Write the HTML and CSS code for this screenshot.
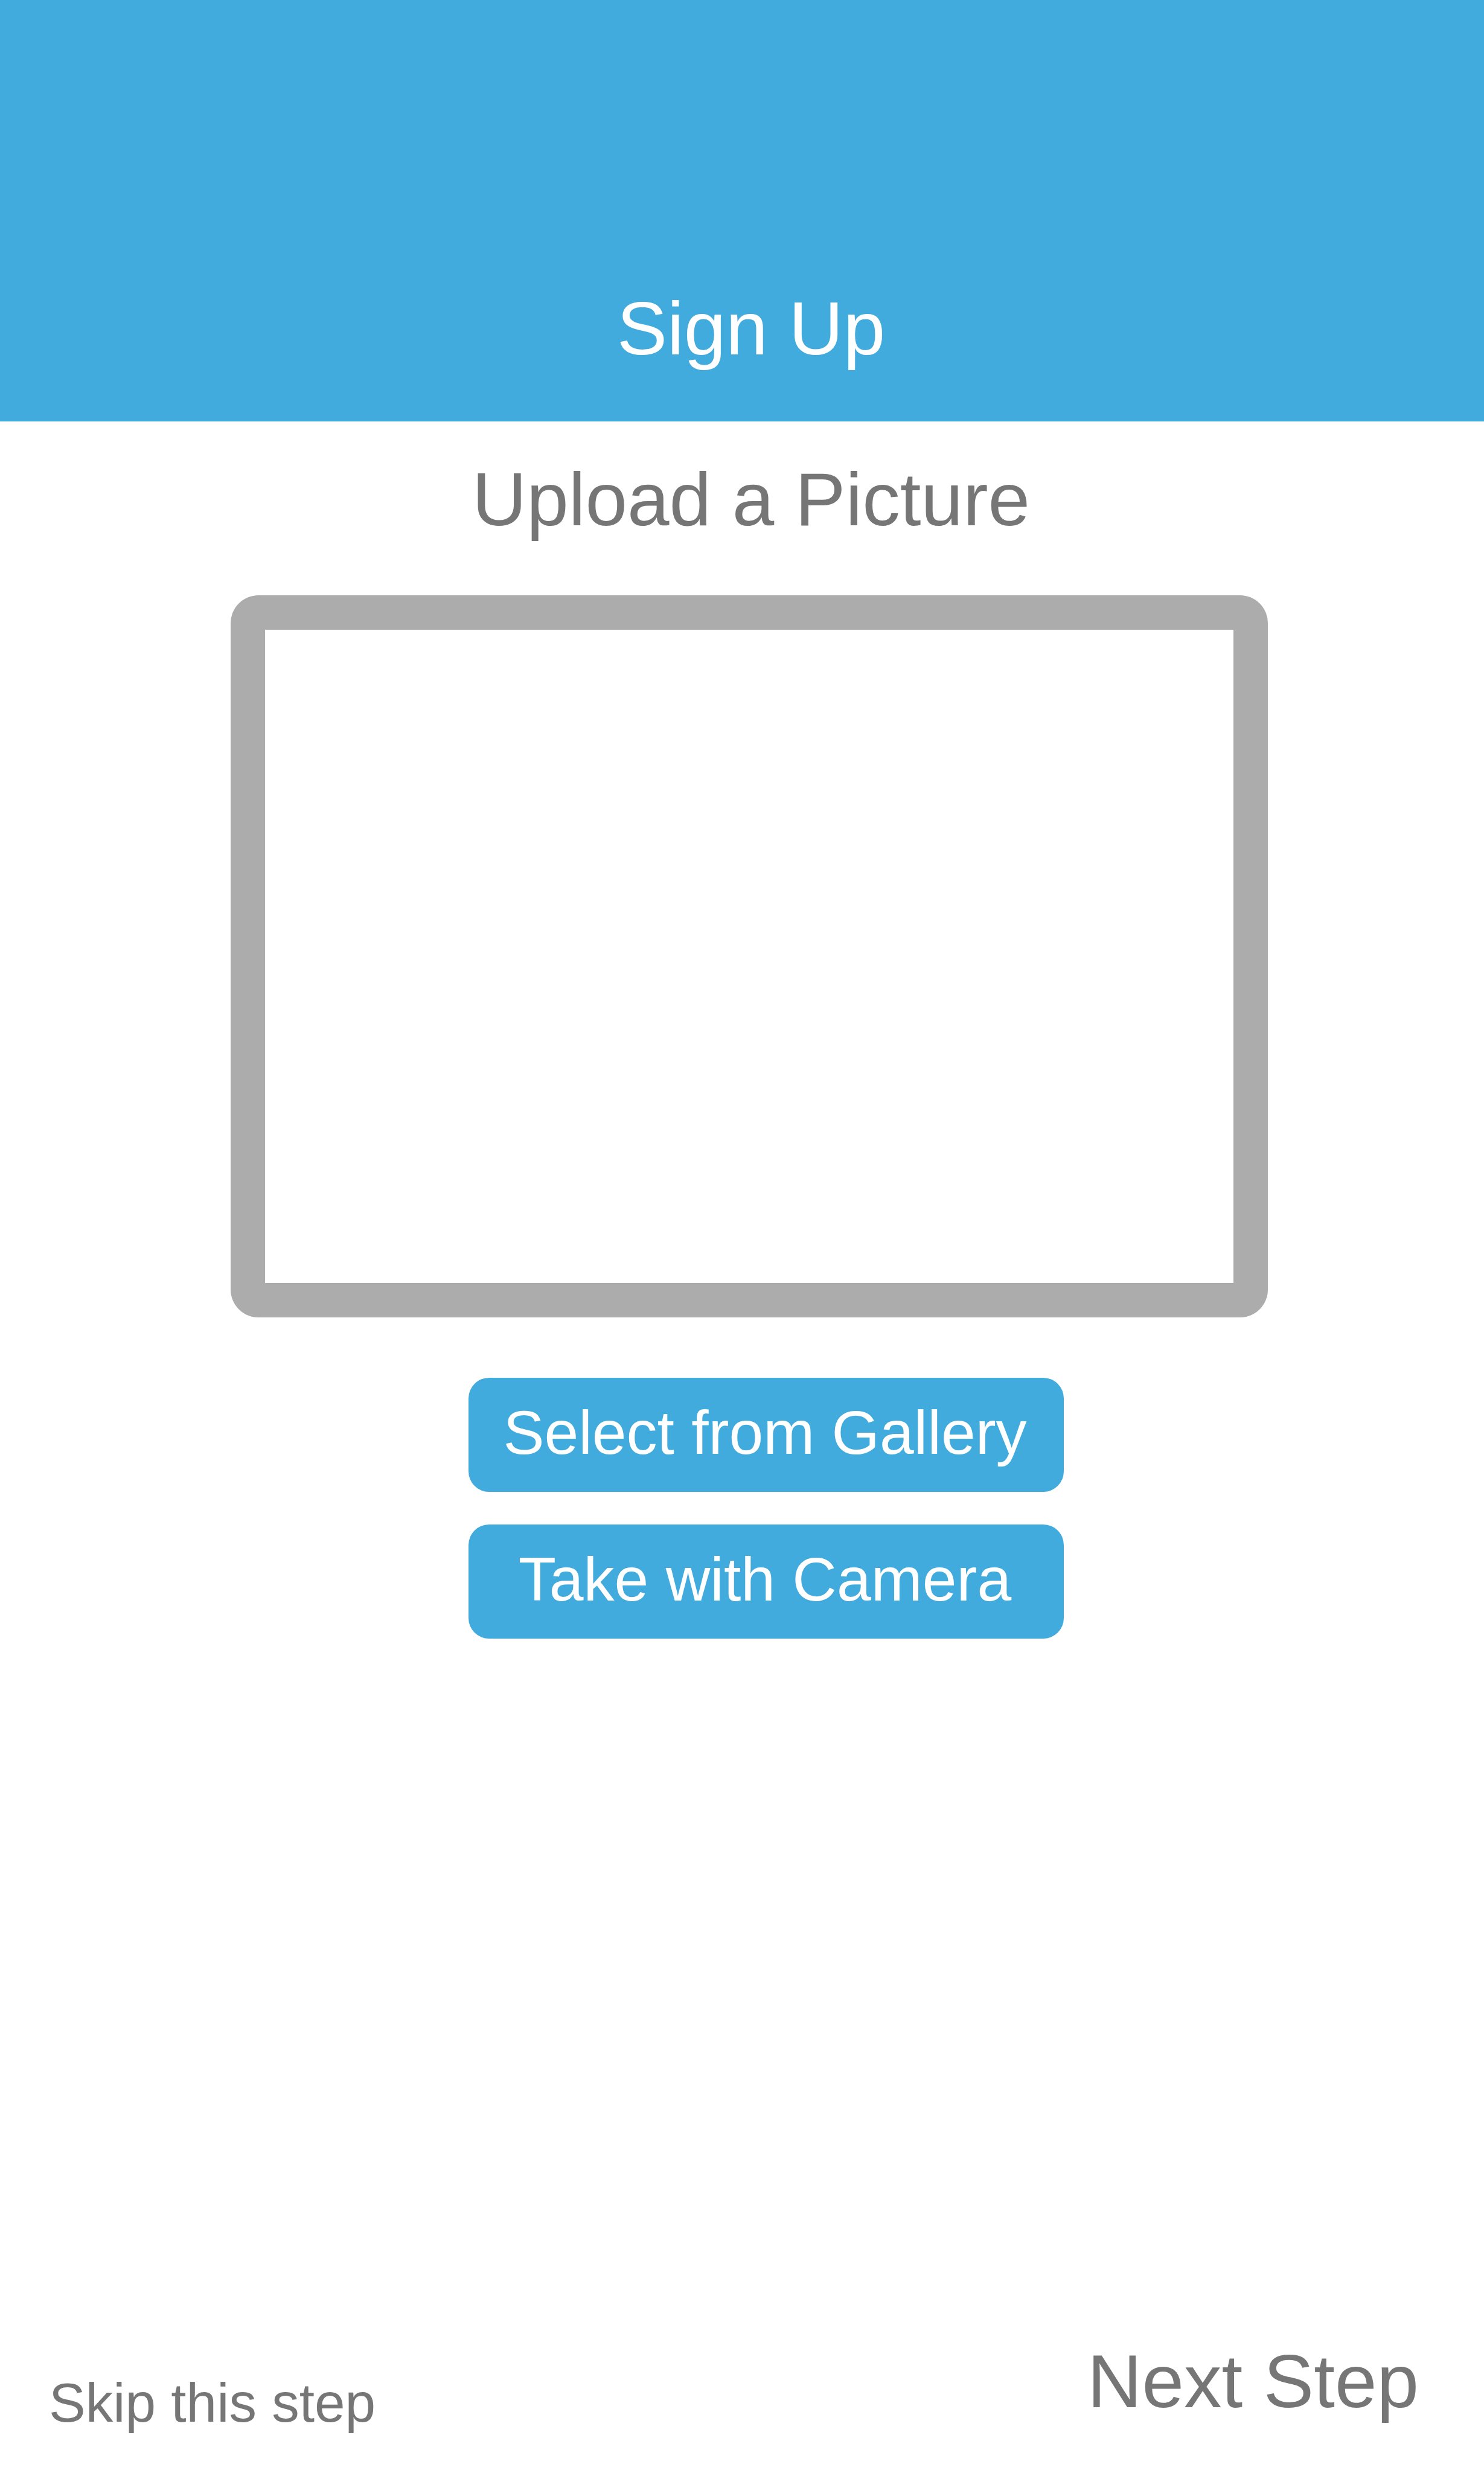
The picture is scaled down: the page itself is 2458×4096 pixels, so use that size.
FILE: index.html
```html
<!DOCTYPE html>
<html lang="en">
<head>
  <meta charset="utf-8">
  <meta name="viewport" content="width=device-width, initial-scale=1">
  <title>Sign Up</title>
  <link rel="stylesheet" href="styles.css">
</head>
<body class="page">
  <header class="header">
    <h1 class="title heading">Sign Up</h1>
  </header>
  <main class="content">
    <h2 class="title heading">Upload a Picture</h2>
    <div class="preview" role="img" aria-label="Picture preview"></div>
    <div class="actions">
      <button class="button" type="button">Select from Gallery</button>
      <button class="button" type="button">Take with Camera</button>
    </div>
  </main>
  <footer class="footer">
    <a class="skip" href="#skip">Skip this step</a>
    <a class="title next" href="#next">Next Step</a>
  </footer>
</body>
</html>
```

FILE: styles.css
```css
* {
  box-sizing: border-box;
}

.page {
  display: flex;
  flex-direction: column;
  min-height: 100vh;
  margin: 0;
  background: #fff;
  color: #767676;
  font-family: "Liberation Sans", Arial, sans-serif;
}

.title {
  margin: 0;
  font-size: 125px;
  font-weight: 400;
  line-height: 144px;
}

.header {
  padding: 472px 0 82px 24px;
  background: #42abde;
  color: #fff;
}

.content {
  display: flex;
  flex: 1;
  flex-direction: column;
  align-items: center;
  padding: 57px 0 57px 24px;
}

.heading {
  padding-left: 6px;
  text-align: center;
}

.preview {
  width: min(100%, 1718px);
  margin-top: 87px;
  aspect-ratio: 1718 / 1196;
  border: 57px solid #acacac;
  border-radius: 46px;
}

/* The left padding sets the buttons right of the preview's centre line. */
.actions {
  display: flex;
  flex-direction: column;
  gap: 54px;
  width: min(100%, 1042px);
  margin-top: 100px;
  padding-left: 56px;
}

.button {
  min-height: 189px;
  padding: 0 4px 8px 0;
  border: 0;
  border-radius: 34px;
  background: #42abde;
  color: #fff;
  font-family: inherit;
  font-size: 102px;
  line-height: 120px;
  cursor: pointer;
}

.footer {
  display: flex;
  align-items: flex-end;
  justify-content: space-between;
  padding: 0 108px 64px 81px;
}

.footer a {
  color: inherit;
  text-decoration: none;
}

.skip {
  font-size: 91px;
  line-height: 104px;
}

.next {
  padding-bottom: 16px;
}
```
